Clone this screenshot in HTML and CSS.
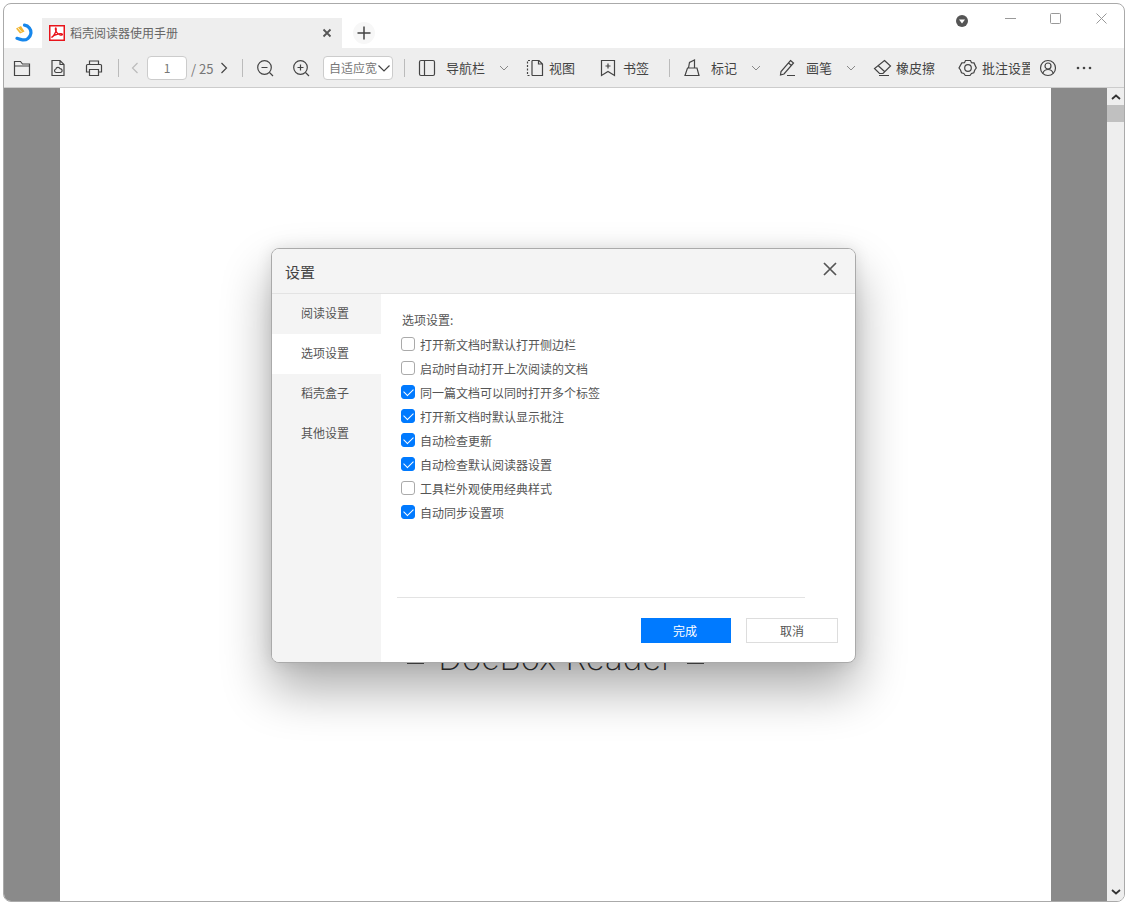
FILE: index.html
```html
<!DOCTYPE html>
<html lang="zh-CN">
<head>
<meta charset="utf-8">
<title>稻壳阅读器</title>
<link rel="stylesheet" href="styles.css">
</head>
<body>
<div class="window">
  <header class="titlebar">
    <svg class="logo" viewBox="0 0 20 20" width="20" height="20"><path d="M9.500 2.200a7.400 7.400 0 1 1-2 14.700c-2-.3-3.800-1-5.500-1.600" fill="none" stroke="#1787ec" stroke-width="3.200" stroke-linecap="round"/><path d="M1 5.500l5-2.500 3.500 5.500-4.500 2z" fill="#f2b632"/><path d="M3 5l3.500 4" stroke="#fff" stroke-width=".8"/></svg>
    <div class="tab">
      <svg class="pdf" viewBox="0 0 16 16" width="16" height="16"><rect x=".75" y=".75" width="14.500" height="14.500" fill="#fff" stroke="#e8141b" stroke-width="1.500"/><path d="M2.500 12.500c2-1 3.500-4 4.500-6.500.4-1.500.3-3-.2-3s-.6 1.500.2 3.200c1 2 2.500 3.300 4 3.800 1.200.3 2.500.1 2.500-.6 0-.7-2-.9-4.500-.4-2.500.5-5 1.500-6.500 3.500z" fill="none" stroke="#e8141b" stroke-width="1.300"/></svg>
      <span class="tab-title">稻壳阅读器使用手册</span>
      <svg class="tab-close" viewBox="0 0 10 10" width="10" height="10"><path d="M1.500 1.500l7 7M8.500 1.500l-7 7" stroke="#555" stroke-width="1.800"/></svg>
    </div>
    <div class="new-tab"><svg viewBox="0 0 14 14" width="14" height="14"><path d="M7 .5v13M.5 7h13" stroke="#444" stroke-width="1.500"/></svg></div>
    <div class="controls">
      <svg class="shield" viewBox="0 0 12 12" width="12" height="12"><circle cx="6" cy="6" r="6" fill="#555"/><path d="M3 4.500h6L6 8.500z" fill="#fff"/></svg>
      <svg class="min" viewBox="0 0 11 11" width="11" height="11"><path d="M0 5.500h11" stroke="#999"/></svg>
      <svg class="max" viewBox="0 0 11 11" width="11" height="11"><rect x=".5" y=".5" width="10" height="10" rx="1" fill="none" stroke="#999"/></svg>
      <svg class="close" viewBox="0 0 11 11" width="11" height="11"><path d="M.5.5l10 10M10.500.5l-10 10" stroke="#999"/></svg>
    </div>
  </header>

  <nav class="toolbar">
    <svg class="ml8" viewBox="0 0 20 20" width="20" height="20"><path d="M2.500 17.500v-14h6l2 2.500h7v11.500zM2.500 8h15" class="ic"/></svg>
    <svg class="ml16" viewBox="0 0 20 20" width="20" height="20"><path d="M4 2.500h8l4 4v11H4zM12 2.500v4h4" class="ic"/><path d="M8 14.500a1.800 1.800 0 0 1-.2-3.500 2.300 2.300 0 0 1 4.300-.3 1.900 1.900 0 0 1 .2 3.800z" class="ic"/></svg>
    <svg class="ml16" viewBox="0 0 20 20" width="20" height="20"><path d="M5.500 7V3h9v4M5 14H2.500V7.500a1 1 0 0 1 1-1h13a1 1 0 0 1 1 1V14H15M5.500 11.500h9v6h-9z" class="ic"/></svg>
    <span class="sep ml14"></span>
    <svg class="ml9" viewBox="0 0 14 14" width="14" height="14"><path d="M9.500 2l-5 5 5 5" fill="none" stroke="#bbb" stroke-width="1.200"/></svg>
    <span class="page-input ml5">1</span>
    <span class="page-total ml4">/ 25</span>
    <svg class="ml3" viewBox="0 0 14 14" width="14" height="14"><path d="M4.500 2l5 5-5 5" class="ic"/></svg>
    <span class="sep ml11"></span>
    <svg class="ml12" viewBox="0 0 20 20" width="20" height="20"><circle cx="9.500" cy="9.500" r="6.800" class="ic"/><path d="M6.500 9.500h6M14.500 14.500l3.500 3.500" class="ic"/></svg>
    <svg class="ml16" viewBox="0 0 20 20" width="20" height="20"><circle cx="9.500" cy="9.500" r="6.800" class="ic"/><path d="M6.500 9.500h6M9.500 6.500v6M14.500 14.500l3.500 3.500" class="ic"/></svg>
    <div class="zoom-select ml12"><span>自适应宽</span><svg viewBox="0 0 14 12" width="14" height="12"><path d="M1.500 3.500L7 9l5.500-5.500" class="ic"/></svg></div>
    <span class="sep ml11"></span>
    <svg class="ml12" viewBox="0 0 20 20" width="20" height="20"><rect x="2.500" y="2.500" width="15" height="15" rx="1.500" class="ic"/><path d="M7.500 2.500v15" class="ic"/></svg>
    <span class="tool-text w40 ml9">导航栏</span>
    <svg class="ml12" viewBox="0 0 12 12" width="12" height="12"><path d="M2 4l4 4 4-4" class="ic-light"/></svg>
    <svg class="ml15" viewBox="0 0 20 20" width="20" height="20"><path d="M7 2.500h7l3.500 3.500v11.500H7M13.500 2.500V6h4" class="ic"/><path d="M5 2.500H2.500v15H5" class="ic" stroke-dasharray="2 1.500"/><path d="M7 2.500v15" class="ic"/></svg>
    <span class="tool-text w27 ml4">视图</span>
    <svg class="ml22" viewBox="0 0 20 20" width="20" height="20"><path d="M3.500 2.500h13v15L10 13.500l-6.500 4zM10 5.500v5M7.500 8h5" class="ic"/></svg>
    <span class="tool-text w27 ml5">书签</span>
    <span class="sep ml19"></span>
    <svg class="ml12" viewBox="0 0 20 20" width="20" height="20"><path d="M6.500 10l1-5.500 5-2.500v8M5.500 10h9.500l2 7.500H3z M3 17.500h14" class="ic"/></svg>
    <span class="tool-text w27 ml9">标记</span>
    <svg class="ml12" viewBox="0 0 12 12" width="12" height="12"><path d="M2 4l4 4 4-4" class="ic-light"/></svg>
    <svg class="ml15" viewBox="0 0 20 20" width="20" height="20"><path d="M13.500 2.500l3 2.500-9.500 11-3.500 1 .5-3.500zM11.500 5l3 2.500M10 17.500h8" class="ic"/></svg>
    <span class="tool-text w27 ml9">画笔</span>
    <svg class="ml12" viewBox="0 0 12 12" width="12" height="12"><path d="M2 4l4 4 4-4" class="ic-light"/></svg>
    <svg class="ml15" viewBox="0 0 20 20" width="20" height="20"><path d="M12.500 2.500l6 5.500-7.500 7.500H7.500l-5-5zM6.500 8l6 5.500M7 17.500h10" class="ic"/></svg>
    <span class="tool-text w40 ml4">橡皮擦</span>
    <svg class="ml22" viewBox="0 0 20 20" width="20" height="20"><path d="M7.500 2.500h5l1 2.200 2.500.2 2.300 5.100-1.500 2-1 2.800-2.300.7-1.500 2h-4.700l-1.500-2-2.300-.7-1-2.800-1.500-2L3.800 4.900l2.700-.2z" class="ic"/><circle cx="10" cy="10" r="3.300" class="ic"/></svg>
    <span class="tool-text w48 ml4">批注设置</span>
    <svg class="ml8" viewBox="0 0 20 20" width="20" height="20"><circle cx="10" cy="10" r="7.500" class="ic"/><circle cx="10" cy="8" r="3" class="ic"/><path d="M4.800 15.200c1-2.500 3-3.700 5.200-3.700s4.200 1.200 5.200 3.700" class="ic"/></svg>
    <svg class="ml16" viewBox="0 0 20 20" width="20" height="20"><circle cx="4" cy="10" r="1.300" fill="#444"/><circle cx="10" cy="10" r="1.300" fill="#444"/><circle cx="16" cy="10" r="1.300" fill="#444"/></svg>
  </nav>

  <main class="viewer">
    <div class="gutter"></div>
    <section class="page">
      <div class="brand"><span class="dash"></span><span class="brand-name">DocBox Reader</span><span class="dash"></span></div>
    </section>
    <div class="gutter"></div>
    <aside class="scrollbar">
      <svg viewBox="0 0 12 8" width="12" height="8"><path d="M2 6l4-3.500L10 6" class="arrow"/></svg>
      <span class="thumb"></span>
      <svg class="arrow-down" viewBox="0 0 12 8" width="12" height="8"><path d="M2 2l4 3.500L10 2" class="arrow"/></svg>
    </aside>
  </main>

  <div class="dialog">
    <div class="dialog-head">
      <span>设置</span>
      <svg viewBox="0 0 14 14" width="14" height="14"><path d="M1 1l12 12M13 1L1 13" stroke="#555" stroke-width="1.700"/></svg>
    </div>
    <div class="dialog-body">
      <ul class="side">
        <li>阅读设置</li>
        <li class="active">选项设置</li>
        <li>稻壳盒子</li>
        <li>其他设置</li>
      </ul>
      <div class="panel">
        <div class="panel-title">选项设置:</div>
        <label class="opt"><span class="check"></span>打开新文档时默认打开侧边栏</label>
        <label class="opt"><span class="check"></span>启动时自动打开上次阅读的文档</label>
        <label class="opt"><span class="check on"></span>同一篇文档可以同时打开多个标签</label>
        <label class="opt"><span class="check on"></span>打开新文档时默认显示批注</label>
        <label class="opt"><span class="check on"></span>自动检查更新</label>
        <label class="opt"><span class="check on"></span>自动检查默认阅读器设置</label>
        <label class="opt"><span class="check"></span>工具栏外观使用经典样式</label>
        <label class="opt"><span class="check on"></span>自动同步设置项</label>
        <div class="divider"></div>
        <div class="actions">
          <button class="btn primary">完成</button>
          <button class="btn">取消</button>
        </div>
      </div>
    </div>
  </div>
</div>
</body>
</html>
```
FILE: styles.css
```css
* { box-sizing: border-box; }
html, body { margin: 0; height: 100%; }
body {
  padding: 3px;
  background: #fff;
  overflow: hidden;
  font-family: "Noto Sans CJK SC", "Liberation Sans", sans-serif;
  font-size: 12px;
  color: #444;
}
.window {
  position: relative;
  display: flex;
  flex-direction: column;
  width: 1122px;
  height: 899px;
  border: 1px solid #aaa;
  border-radius: 8px;
  overflow: hidden;
  background: #fff;
}

/* title bar */
.titlebar { display: flex; align-items: flex-start; height: 44px; flex: none; }
.logo { margin: 19px 0 0 11px; flex: none; }
.tab {
  display: flex;
  align-items: center;
  width: 300px;
  height: 30px;
  margin: 14px 0 0 7px;
  padding-left: 7px;
  background: #eee;
}
.tab-title { margin-left: 5px; color: #666; line-height: 30px; }
.tab-close { margin-left: auto; margin-right: 10px; }
.new-tab {
  display: flex;
  align-items: center;
  justify-content: center;
  width: 22px;
  height: 22px;
  margin: 18px 0 0 11px;
  border-radius: 50%;
  background: #f7f7f7;
}
.controls { display: flex; align-items: flex-start; margin-left: auto; }
.shield { margin: 11px 0 0; }
.min { margin: 9px 0 0 37px; }
.max { margin: 9px 0 0 34px; }
.close { margin: 9px 17px 0 35px; }

/* toolbar */
.toolbar {
  display: flex;
  align-items: center;
  flex: none;
  height: 40px;
  padding-top: 1px;
  background: #eee;
  border-bottom: 1px solid #ccc;
}
.toolbar svg { flex: none; }
.ic { fill: none; stroke: #444; stroke-width: 1.200; }
.ic-light { fill: none; stroke: #888; stroke-width: 1; }
.sep { width: 1px; height: 18px; background: #bbb; flex: none; }
.page-input {
  display: flex;
  align-items: center;
  justify-content: center;
  flex: none;
  width: 40px;
  height: 24px;
  margin-top: -1px;
  border: 1px solid #ccc;
  border-radius: 4px;
  background: #fff;
  color: #777;
}
.page-total { width: 23px; flex: none; font-size: 13px; color: #777; white-space: nowrap; }
.zoom-select {
  display: flex;
  align-items: center;
  flex: none;
  width: 70px;
  height: 24px;
  margin-top: -1px;
  padding-left: 5px;
  border: 1px solid #ccc;
  border-radius: 4px;
  background: #fff;
  color: #777;
}
.tool-text { flex: none; overflow: hidden; white-space: nowrap; font-size: 13px; color: #444; line-height: 20px; }
.w27 { width: 27px; }
.w40 { width: 40px; }
.w48 { width: 48px; }
.ml3 { margin-left: 3px; }
.ml4 { margin-left: 4px; }
.ml5 { margin-left: 5px; }
.ml8 { margin-left: 8px; }
.ml9 { margin-left: 9px; }
.ml11 { margin-left: 11px; }
.ml12 { margin-left: 12px; }
.ml14 { margin-left: 14px; }
.ml15 { margin-left: 15px; }
.ml16 { margin-left: 16px; }
.ml19 { margin-left: 19px; }
.ml22 { margin-left: 22px; }

/* viewer */
.viewer { display: flex; flex: 1; min-height: 0; }
.gutter { width: 56px; flex: none; background: #8a8a8a; }
.page { width: 991px; flex: none; background: #fff; padding-top: 550px; }
.brand { display: flex; align-items: center; justify-content: center; gap: 14px; height: 40px; }
.dash { width: 17px; height: 1px; margin-top: 10px; background: #555; }
.brand-name { font-family: "Inter", "Liberation Sans", sans-serif; font-weight: 200; font-size: 33px; line-height: 40px; color: #333; white-space: nowrap; }
.scrollbar { display: flex; flex-direction: column; align-items: center; width: 17px; flex: none; background: #eee; padding-top: 5px; }
.thumb { width: 17px; height: 17px; margin-top: 4px; background: #c0c0c0; }
.arrow { fill: none; stroke: #333; stroke-width: 1.800; }
.arrow-down { margin-top: auto; margin-bottom: 5px; }

/* dialog */
.dialog {
  position: absolute;
  left: 267px;
  top: 244px;
  width: 585px;
  height: 415px;
  display: flex;
  flex-direction: column;
  border: 1px solid #aaa;
  border-radius: 8px;
  overflow: hidden;
  background: #fff;
  box-shadow: 0 26px 50px rgba(0, 0, 0, .33), 0 0 16px rgba(0, 0, 0, .1);
}
.dialog-head {
  display: flex;
  align-items: center;
  justify-content: space-between;
  flex: none;
  height: 45px;
  padding: 0 18px 0 13px;
  background: #f4f4f4;
  border-bottom: 1px solid #e3e3e3;
  font-size: 15px;
  color: #444;
}
.dialog-head svg { margin-top: -5px; }
.dialog-body { display: flex; flex: 1; min-height: 0; }
.side { width: 109px; flex: none; margin: 0; padding: 0; list-style: none; background: #f4f4f4; }
.side li { height: 40px; padding-left: 29px; line-height: 38px; color: #555; }
.side li.active { background: #fff; }
.panel { flex: 1; padding-top: 16px; }
.panel-title { height: 20px; margin: 0 0 2px 21px; line-height: 20px; color: #555; }
.opt { display: flex; align-items: center; height: 24px; padding-left: 20px; color: #555; }
.check {
  position: relative;
  flex: none;
  width: 14px;
  height: 14px;
  margin-right: 5px;
  border: 1px solid #aaa;
  border-radius: 3px;
  background: #fff;
}
.check.on { background: #007aff; border-color: #007aff; }
.check.on::after {
  content: "";
  position: absolute;
  left: 1.500px;
  top: 2px;
  width: 8px;
  height: 5px;
  border-left: 1.800px solid #fff;
  border-bottom: 1.800px solid #fff;
  transform: rotate(-45deg);
}
.divider { width: 408px; height: 1px; margin: 73px 0 0 16px; background: #e3e3e3; }
.actions { display: flex; justify-content: flex-end; gap: 15px; margin-top: 20px; padding-right: 17px; }
.btn {
  width: 92px;
  height: 25px;
  padding: 0;
  border: 1px solid #ddd;
  background: #fff;
  font: inherit;
  color: #555;
}
.primary { width: 90px; padding-right: 2px; border: 0; background: #007aff; color: #fff; }
```
